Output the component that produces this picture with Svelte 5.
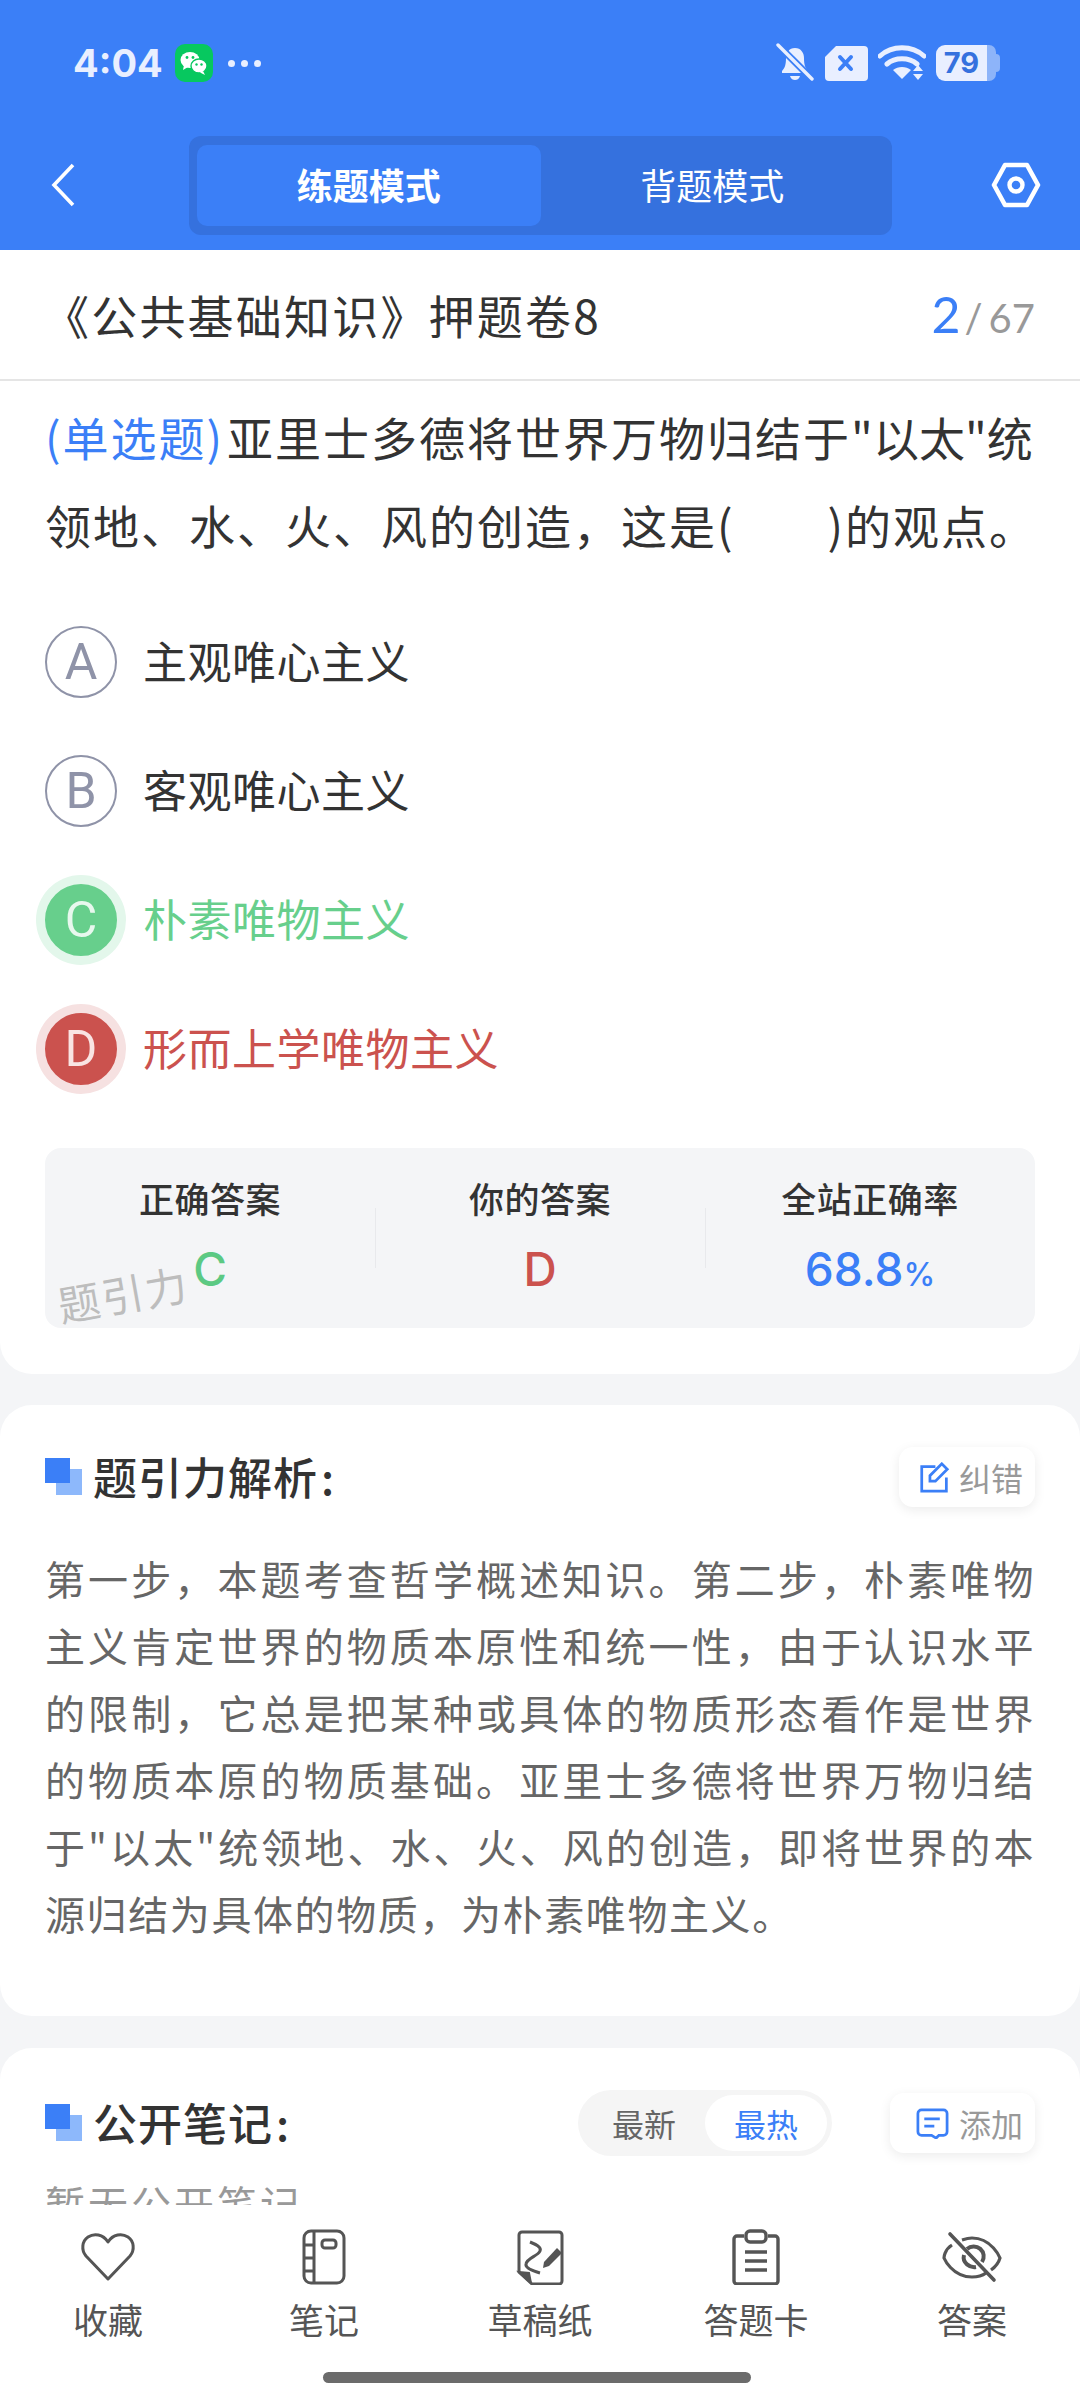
<script>
  const options = [
    { k: 'A', t: '主观唯心主义', s: '' },
    { k: 'B', t: '客观唯心主义', s: '' },
    { k: 'C', t: '朴素唯物主义', s: 'right' },
    { k: 'D', t: '形而上学唯物主义', s: 'wrong' }
  ];
</script>

<div class="page">
  <header class="top">
    <div class="status">
      <span class="time">4:04</span>
      <svg class="wechat" viewBox="0 0 38 38" width="38" height="38">
        <rect width="38" height="38" rx="10" fill="#07c85f" />
        <ellipse cx="15" cy="16" rx="9.5" ry="8" fill="#fff" />
        <path d="M9 21l-1 5 5-3z" fill="#fff" />
        <ellipse cx="24" cy="22" rx="8" ry="7" fill="#fff" stroke="#07c85f" stroke-width="1.4" />
        <path d="M28 27l2 4-5-2.5z" fill="#fff" />
        <circle cx="12" cy="13.5" r="1.4" fill="#07c85f" /><circle cx="18" cy="13.5" r="1.4" fill="#07c85f" />
        <circle cx="21.5" cy="20.5" r="1.2" fill="#07c85f" /><circle cx="26.5" cy="20.5" r="1.2" fill="#07c85f" />
      </svg>
      <span class="dots"><i></i><i></i><i></i></span>
      <span class="spacer"></span>
      <svg class="st" viewBox="0 0 38 40" width="38" height="40">
        <path d="M19 5c-6 0-9 5-9 10 0 6-1 10-4 13v2h26v-2c-3-3-4-7-4-13 0-5-3-10-9-10z" fill="#e9efff" />
        <path d="M14 33h10c-1 3-3 4-5 4s-4-1-5-4z" fill="#e9efff" />
        <path d="M1 1l36 36" stroke="#3b7ff7" stroke-width="7" />
        <path d="M2 2l34 34" stroke="#e9efff" stroke-width="3.4" stroke-linecap="round" />
      </svg>
      <svg class="st" viewBox="0 0 44 36" width="44" height="36">
        <path d="M12 1h28a4 4 0 0 1 4 4v27a4 4 0 0 1-4 4H5a4 4 0 0 1-4-4V12z" fill="#e9efff" />
        <path d="M16 12l11 12M27 12L16 24" stroke="#3b7ff7" stroke-width="4" stroke-linecap="round" />
      </svg>
      <svg class="st" viewBox="0 0 48 38" width="48" height="38">
        <path d="M2 12c12-11 32-11 44 0M9 20c8-7 22-7 30 0" fill="none" stroke="#e9efff" stroke-width="5" stroke-linecap="round" />
        <path d="M15 26c5-4 13-4 18 0l-9 9z" fill="#e9efff" />
        <path d="M40 21l5 6H35zM35 30h10l-5 6z" fill="#e9efff" />
      </svg>
      <div class="batt">
        <span class="batt-num">79</span>
        <span class="batt-rest"></span>
        <span class="batt-tip"></span>
      </div>
    </div>
    <div class="bar">
      <div class="backwrap">
        <svg viewBox="0 0 24 44" width="24" height="44"><path d="M22 2L3 22l19 20" fill="none" stroke="#fff" stroke-width="3.6" /></svg>
      </div>
      <div class="mode">
        <div class="mode-item on">练题模式</div>
        <div class="mode-item">背题模式</div>
      </div>
      <div class="gearwrap">
        <svg viewBox="0 0 50 46" width="50" height="46">
          <path d="M14 3h22l11 20-11 20H14L3 23z" fill="none" stroke="#fff" stroke-width="4.6" stroke-linejoin="round" />
          <circle cx="25" cy="23" r="6.5" fill="none" stroke="#fff" stroke-width="4.4" />
        </svg>
      </div>
    </div>
  </header>

  <div class="titlebar">
    <div class="title">《公共基础知识》押题卷8</div>
    <div class="count"><b>2</b><span class="sl">/</span><span>67</span></div>
  </div>

  <main class="scroll">
    <section class="card first">
      <p class="q"><span class="tag">(单选题)</span>亚里士多德将世界万物归结于<span class="quoted">"以太"</span>统领地、水、火、风的创造，这是(<span class="blank"></span>)的观点。</p>
      <div class="opts">
        {#each options as o}
          <div class="opt {o.s}">
            <span class="ball">{o.k}</span>
            <span class="otext">{o.t}</span>
          </div>
        {/each}
      </div>
      <div class="stats">
        <div class="stat"><div class="lab">正确答案</div><div class="val green">C</div></div>
        <div class="stat sep"><div class="lab">你的答案</div><div class="val red">D</div></div>
        <div class="stat sep"><div class="lab">全站正确率</div><div class="val blue">68.8<small>%</small></div></div>
        <div class="mark">题引力</div>
      </div>
    </section>

    <section class="card second">
      <div class="head">
        <span class="sq"><i></i><i></i></span>
        <h2>题引力解析<span class="colon">:</span></h2>
        <span class="grow"></span>
        <div class="btn">
          <svg viewBox="0 0 34 34" width="31" height="31">
            <path d="M18 5H3v27h27V17" fill="none" stroke="#3b7ff7" stroke-width="3" />
            <path d="M12 21v-6L25 2l6 6-13 13z" fill="none" stroke="#3b7ff7" stroke-width="3" />
          </svg>
          <span>纠错</span>
        </div>
      </div>
      <p class="body">第一步，本题考查哲学概述知识。第二步，朴素唯物主义肯定世界的物质本原性和统一性，由于认识水平的限制，它总是把某种或具体的物质形态看作是世界的物质本原的物质基础。亚里士多德将世界万物归结于"以太"统领地、水、火、风的创造，即将世界的本源归结为具体的物质，为朴素唯物主义。</p>
    </section>

    <section class="card third">
      <div class="head">
        <span class="sq"><i></i><i></i></span>
        <h2>公开笔记<span class="colon">:</span></h2>
        <span class="grow"></span>
        <div class="pill"><span>最新</span><span class="pill-on">最热</span></div>
        <div class="btn add">
          <svg viewBox="0 0 36 34" width="35" height="31">
            <path d="M6 2h24a4 4 0 0 1 4 4v20a4 4 0 0 1-4 4h-5l-3 3-5-3H6a4 4 0 0 1-4-4V6a4 4 0 0 1 4-4z" fill="none" stroke="#3b7ff7" stroke-width="3" />
            <path d="M9 12h17M9 20h11" stroke="#3b7ff7" stroke-width="3" />
          </svg>
          <span>添加</span>
        </div>
      </div>
      <p class="none">暂无公开笔记</p>
    </section>
  </main>

  <nav class="nav">
    <div class="tab">
      <svg viewBox="0 0 56 56" width="56" height="56">
        <path d="M28 50L6 27C1 21 2 12 8 8c6-4 15-3 20 5 5-8 14-9 20-5 6 4 7 13 2 19z" fill="none" stroke="#555" stroke-width="3" stroke-linejoin="round" />
      </svg>
      <span>收藏</span>
    </div>
    <div class="tab">
      <svg viewBox="0 0 56 56" width="56" height="56">
        <rect x="8" y="2" width="40" height="52" rx="7" fill="none" stroke="#555" stroke-width="3" />
        <path d="M18 2v52M8 16h10M8 29h10M8 42h10" fill="none" stroke="#555" stroke-width="3" />
        <rect x="26" y="11" width="14" height="8" rx="3" fill="none" stroke="#555" stroke-width="3" />
      </svg>
      <span>笔记</span>
    </div>
    <div class="tab">
      <svg viewBox="0 0 56 56" width="56" height="56">
        <path d="M7 43V6a3 3 0 0 1 3-3h37a3 3 0 0 1 3 3v46a3 3 0 0 1-3 3H20z" fill="none" stroke="#555" stroke-width="3" />
        <path d="M7 43l10 1 2 10z" fill="#555" stroke="#555" stroke-width="2" />
        <path d="M18 13c5 2 12 5 10 9-2 5-13 7-14 13-1 4 7 7 14 9" fill="none" stroke="#555" stroke-width="3" />
        <path d="M31 39l1-6 13-14 5 5-13 13z" fill="#555" />
      </svg>
      <span>草稿纸</span>
    </div>
    <div class="tab">
      <svg viewBox="0 0 56 56" width="56" height="56">
        <path d="M16 7H9a3 3 0 0 0-3 3v42a3 3 0 0 0 3 3h38a3 3 0 0 0 3-3V10a3 3 0 0 0-3-3h-7" fill="none" stroke="#555" stroke-width="3.4" />
        <rect x="18" y="2" width="20" height="11" rx="4" fill="none" stroke="#555" stroke-width="3.4" />
        <path d="M17 23h22M17 32h22M17 41h22" stroke="#555" stroke-width="3.4" />
      </svg>
      <span>答题卡</span>
    </div>
    <div class="tab">
      <svg viewBox="0 0 60 56" width="60" height="56">
        <path d="M10 16C2 21 2 29 2 29s8 19 28 19c6 0 10-1 14-4M20 11c3-1 6-2 10-2 20 0 28 20 28 20s-2 7-9 12" fill="none" stroke="#555" stroke-width="3.2" />
        <path d="M25 20a10 10 0 0 1 15 13M22 26c-2 8 6 13 12 12" fill="none" stroke="#555" stroke-width="4" />
        <path d="M8 5l44 46" stroke="#555" stroke-width="3.6" stroke-linecap="round" />
      </svg>
      <span>答案</span>
    </div>
    <div class="home"><i></i></div>
  </nav>
</div>

<style>
  :global(body) { margin: 0; background: #f4f5f7; }
  .page {
    width: 1080px; height: 2400px; display: flex; flex-direction: column; overflow: hidden;
    font-family: "Noto Sans CJK SC", "Noto Sans", sans-serif; color: #333; background: #f4f5f7;
  }
  .top { background: #3b7ff7; height: 250px; flex: none; display: flex; flex-direction: column; }
  .status { height: 126px; display: flex; align-items: center; padding: 0 80px 0 73px; }
  .time { font: 700 38px Inter, sans-serif; color: #e9efff; }
  .wechat { margin-left: 12px; }
  .dots { display: flex; gap: 6px; margin-left: 15px; }
  .dots i { width: 7px; height: 7px; border-radius: 50%; background: #e9efff; }
  .spacer { flex: 1; }
  .st { flex: none; margin-right: 10px; }
  .batt { display: flex; align-items: center; height: 36px; }
  .batt-num {
    width: 51px; height: 36px; background: #e9efff; border-radius: 9px 0 0 9px; color: #3571de;
    font: 700 29px/36px Inter, sans-serif; text-align: center;
  }
  .batt-rest { width: 9px; height: 36px; background: #8db4f9; border-radius: 0 7px 7px 0; }
  .batt-tip { width: 4px; height: 18px; background: #8db4f9; border-radius: 0 4px 4px 0; }
  .bar { display: flex; align-items: center; margin-top: 10px; height: 99px; }
  .backwrap { width: 189px; padding: 0 0 2px 51px; box-sizing: border-box; display: flex; }
  .mode { width: 703px; height: 99px; background: #3571de; border-radius: 12px; display: flex; padding: 9px 8px; box-sizing: border-box; }
  .mode-item { flex: 1; display: flex; align-items: center; justify-content: center; color: #fff; font-size: 36px; border-radius: 10px; padding-bottom: 3px; }
  .mode-item.on { background: #3b7ff7; font-weight: 700; }
  .gearwrap { flex: 1; display: flex; justify-content: center; padding: 0 0 2px 60px; }

  .titlebar {
    flex: none; height: 131px; background: #fff; border-bottom: 2px solid #e5e5e5; box-sizing: border-box;
    display: flex; align-items: center; justify-content: space-between; padding: 0 45px 2px 43px;
  }
  .title { font-size: 46px; letter-spacing: 2.2px; color: #333; }
  .count { display: flex; align-items: baseline; font: 400 40px Lato, sans-serif; color: #999; }
  .count b { font-weight: 400; font-size: 50px; color: #3b7ff7; }
  .count .sl { margin: 0 6px 0 4px; }

  .scroll { flex: 1; min-height: 0; overflow: hidden; background: #f4f5f7; }
  .card { background: #fff; }
  .first { padding: 11px 40px 46px 45px; border-radius: 0 0 32px 32px; }
  .q { margin: 0; font-size: 46px; letter-spacing: 2px; line-height: 88px; color: #333; }
  .tag { color: #3b7ff7; margin-right: 3px; }
  .quoted { letter-spacing: 0; }
  .blank { display: inline-block; width: 93px; }
  .opts { display: flex; flex-direction: column; gap: 57px; margin-top: 58px; }
  .opt { display: flex; align-items: center; height: 72px; font-size: 44px; letter-spacing: .5px; }
  .otext { padding-bottom: 5px; }
  .ball {
    width: 72px; height: 72px; box-sizing: border-box; border-radius: 50%; border: 2px solid #8f93a8; color: #8f93a8;
    display: flex; align-items: center; justify-content: center; font: 400 50px Roboto, sans-serif; flex: none; margin-right: 26px; letter-spacing: 0;
  }
  .right .ball { background: #67cf8c; border-color: #67cf8c; color: #e8f8ee; box-shadow: 0 0 0 9px #e3f7eb; }
  .right .otext { color: #67cf8c; }
  .wrong .ball { background: #cb524e; border-color: #cb524e; color: #f9e4e3; box-shadow: 0 0 0 9px #f6e1e1; }
  .wrong .otext { color: #cb524e; }

  .stats { position: relative; margin-top: 63px; margin-right: 5px; height: 180px; background: #f4f5f7; border-radius: 16px; display: flex; }
  .stat { flex: 1; position: relative; display: flex; flex-direction: column; align-items: center; padding-top: 27px; }
  .sep::before { content: ""; position: absolute; left: 0; top: 60px; height: 60px; border-left: 1px solid #e8e9ec; }
  .lab { font-size: 35px; letter-spacing: .5px; font-weight: 500; line-height: 46px; color: #333; }
  .val { font: 500 46px/60px Inter, sans-serif; margin-top: 18px; }
  .val small { font-size: 32px; }
  .green { color: #5cc983; }
  .red { color: #cb524e; }
  .blue { color: #3b7ff7; }
  .mark { position: absolute; left: 12px; bottom: 5px; font-size: 42px; line-height: 60px; color: #bdbdbd; transform: rotate(-10deg); letter-spacing: 2px; }

  .second { margin-top: 31px; padding: 40px 45px 69px; border-radius: 32px; }
  .third { margin-top: 32px; padding: 43px 45px 0; border-radius: 32px 32px 0 0; height: 200px; }
  .head { display: flex; align-items: center; height: 62px; }
  .sq { position: relative; width: 37px; height: 37px; flex: none; margin-right: 11px; }
  .sq i { position: absolute; display: block; }
  .sq i:first-child { left: 0; top: 0; width: 25px; height: 25px; background: #3b7ff7; z-index: 1; }
  .sq i:last-child { left: 11px; top: 11px; width: 26px; height: 26px; background: #8db8fb; }
  h2 { margin: 0; font-size: 44px; font-weight: 500; color: #333; letter-spacing: 1px; }
  .colon { margin-left: 3px; }
  .grow { flex: 1; }
  .btn {
    display: flex; align-items: center; gap: 9px; height: 60px; margin-top: 2px; padding: 0 12px 0 20px; border-radius: 14px; background: #fff;
    box-shadow: 0 3px 12px rgba(0, 0, 0, .08); font-size: 32px; color: #999;
  }
  .add { margin-left: 58px; padding-left: 25px; }
  .body { margin: 38px 0 0; font-size: 40px; letter-spacing: 1.6px; line-height: 67px; color: #666; text-align: justify; }
  .pill { height: 66px; width: 254px; margin-top: 2px; background: #f5f5f5; border-radius: 33px; display: flex; align-items: center; padding: 5px; box-sizing: border-box; font-size: 32px; color: #666; }
  .pill span { flex: 1; text-align: center; }
  .pill .pill-on { flex: none; width: 122px; height: 56px; line-height: 56px; background: #fff; border-radius: 28px; color: #3b7ff7; }
  .none { margin: 20px 0 0; font-size: 40px; line-height: 60px; color: #999; letter-spacing: 3px; }

  .nav { flex: none; height: 195px; background: #fff; display: grid; grid-template-columns: repeat(5, 1fr); position: relative; }
  .tab { display: flex; flex-direction: column; align-items: center; padding-top: 24px; font-size: 35px; line-height: 46px; color: #555; }
  .tab span { margin-top: 11px; }
  .home { position: absolute; left: 0; right: 6px; bottom: 17px; display: flex; justify-content: center; }
  .home i { width: 428px; height: 11px; border-radius: 6px; background: #6b6b6b; }
</style>
